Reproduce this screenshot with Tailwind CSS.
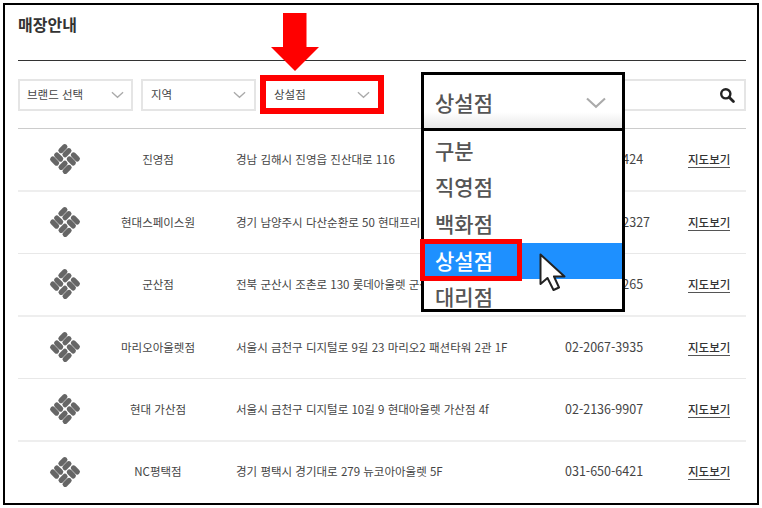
<!DOCTYPE html>
<html lang="ko">

<head>
    <meta charset="UTF-8">
    <title>매장안내</title>
    <script src="https://cdn.jsdelivr.net/npm/@tailwindcss/browser@4"></script>
</head>

<body class="bg-white w-[762px] h-[508px] overflow-hidden font-['Noto_Sans_CJK_KR','Liberation_Sans',sans-serif] text-[#444]">
    <svg class="hidden">
        <symbol id="logo" viewBox="-16 -16 32 32">
            <g transform="rotate(45) scale(-1 1)" fill="#666">
                <rect x="-10.5" y="-10.8" width="10" height="5" rx="2.4"/>
                <rect x="-10.5" y="-5.4" width="10" height="5" rx="2.4"/>
                <rect x="0.4" y="-10.5" width="5" height="10" rx="2.4"/>
                <rect x="5.8" y="-10.5" width="5" height="10" rx="2.4"/>
                <rect x="0.5" y="0.4" width="10" height="5" rx="2.4"/>
                <rect x="0.5" y="5.8" width="10" height="5" rx="2.4"/>
                <rect x="-10.8" y="0.5" width="5" height="10" rx="2.4"/>
                <rect x="-5.4" y="0.5" width="5" height="10" rx="2.4"/>
            </g>
        </symbol>
        <symbol id="chev" viewBox="0 0 14 8">
            <path d="M1 1l6 5.5L13 1" fill="none" stroke="#aaa" stroke-width="1.4"/>
        </symbol>
    </svg>

    <div class="relative ml-[3px] mt-[3px] w-[756px] h-[502px] border-2 border-black pl-[13px] pr-[11px]">
        <h1 class="h-[56px] pt-[7px] text-[16px] leading-[24px] font-bold text-[#333] border-b border-[#333]">매장안내</h1>

        <!-- 필터 -->
        <div class="h-[68px] flex items-center border-b border-[#ccc] text-[11.5px]">
            <div class="w-[115px] h-[32px] flex items-center justify-between pl-[7px] pr-[7px] border-2 border-[#e5e5e5]">
                브랜드 선택 <svg class="w-[13px] h-[8px]"><use href="#chev"/></svg>
            </div>
            <div class="ml-[8px] w-[115px] h-[32px] flex items-center justify-between pl-[8px] pr-[8px] border-2 border-[#e5e5e5]">
                지역 <svg class="w-[13px] h-[8px]"><use href="#chev"/></svg>
            </div>
            <div class="ml-[4px] w-[124px] h-[39px] flex items-center justify-between pl-[8px] pr-[8px] border-[6px] border-[#f00]">
                상설점 <svg class="w-[13px] h-[8px]"><use href="#chev"/></svg>
            </div>
            <div class="ml-[37px] flex-1 h-[32px] flex items-center justify-end pr-[9px] border-2 border-[#e5e5e5]">
                <svg class="w-[16px] h-[16px]" viewBox="0 0 16 16"><circle cx="6.8" cy="6.8" r="4.6" fill="none" stroke="#222" stroke-width="2.4"/><path d="M10.4 10.4l4 4" stroke="#222" stroke-width="2.8" stroke-linecap="round"/></svg>
            </div>
        </div>

        <!-- 매장 목록 -->
        <ul class="text-[11.5px]">
            <li class="h-[62.5px] flex items-center border-b-2 border-[#eee]">
                <svg class="ml-[30px] w-[34px] h-[34px] shrink-0"><use href="#logo"/></svg>
                <span class="w-[152px] mr-[2px] text-center">진영점</span>
                <span class="w-[329px]">경남 김해시 진영읍 진산대로 116</span>
                <span class="w-[123px] text-[12.5px]">055-343-7424</span>
                <a class="font-medium text-[#333] border-b border-[#555] leading-[16px]">지도보기</a>
            </li>
            <li class="h-[62.5px] flex items-center border-b border-[#e8e8e8]">
                <svg class="ml-[30px] w-[34px] h-[34px] shrink-0"><use href="#logo"/></svg>
                <span class="w-[152px] mr-[2px] text-center">현대스페이스원</span>
                <span class="w-[329px]">경기 남양주시 다산순환로 50 현대프리미엄아울렛 3층</span>
                <span class="w-[123px] text-[12.5px]">031-5560-2327</span>
                <a class="font-medium text-[#333] border-b border-[#555] leading-[16px]">지도보기</a>
            </li>
            <li class="h-[62.5px] flex items-center border-b-2 border-[#eee]">
                <svg class="ml-[30px] w-[34px] h-[34px] shrink-0"><use href="#logo"/></svg>
                <span class="w-[152px] mr-[2px] text-center">군산점</span>
                <span class="w-[329px]">전북 군산시 조촌로 130 롯데아울렛 군산점 2층</span>
                <span class="w-[123px] text-[12.5px]">063-731-3265</span>
                <a class="font-medium text-[#333] border-b border-[#555] leading-[16px]">지도보기</a>
            </li>
            <li class="h-[62.5px] flex items-center border-b border-[#e8e8e8]">
                <svg class="ml-[30px] w-[34px] h-[34px] shrink-0"><use href="#logo"/></svg>
                <span class="w-[152px] mr-[2px] text-center">마리오아울렛점</span>
                <span class="w-[329px]">서울시 금천구 디지털로 9길 23 마리오2 패션타워 2관 1F</span>
                <span class="w-[123px] text-[12.5px]">02-2067-3935</span>
                <a class="font-medium text-[#333] border-b border-[#555] leading-[16px]">지도보기</a>
            </li>
            <li class="h-[62.5px] flex items-center border-b-2 border-[#eee]">
                <svg class="ml-[30px] w-[34px] h-[34px] shrink-0"><use href="#logo"/></svg>
                <span class="w-[152px] mr-[2px] text-center">현대 가산점</span>
                <span class="w-[329px]">서울시 금천구 디지털로 10길 9 현대아울렛 가산점 4f</span>
                <span class="w-[123px] text-[12.5px]">02-2136-9907</span>
                <a class="font-medium text-[#333] border-b border-[#555] leading-[16px]">지도보기</a>
            </li>
            <li class="h-[60px] flex items-center">
                <svg class="ml-[30px] w-[34px] h-[34px] shrink-0"><use href="#logo"/></svg>
                <span class="w-[152px] mr-[2px] text-center">NC평택점</span>
                <span class="w-[329px]">경기 평택시 경기대로 279 뉴코아아울렛 5F</span>
                <span class="w-[123px] text-[12.5px]">031-650-6421</span>
                <a class="font-medium text-[#333] border-b border-[#555] leading-[16px]">지도보기</a>
            </li>
        </ul>

        <!-- 빨간 화살표 -->
        <svg class="absolute left-[266px] top-[8px] w-[48px] h-[58px]" viewBox="0 0 48 58">
            <path d="M12 0h23.500v34h12.500L24 58 0 34h12z" fill="#f00"/>
        </svg>

        <!-- 드롭다운 확대 -->
        <div class="absolute left-[416px] top-[67px] w-[204px] h-[240px] border-[3px] border-black bg-white flex flex-col overflow-hidden text-[21px] font-medium text-[#555]">
            <div class="h-[56px] shrink-0 flex items-center justify-between pt-[3px] pl-[11px] pr-[15px] border-b-[3px] border-black bg-linear-to-b from-white from-70% to-[#e8e8e8]">
                상설점 <svg class="w-[22px] h-[12px]"><use href="#chev"/></svg>
            </div>
            <div class="h-[36px] shrink-0 mt-[2px] flex items-center pl-[11px]">구분</div>
            <div class="h-[36px] shrink-0 flex items-center pl-[11px]">직영점</div>
            <div class="h-[38px] shrink-0 flex items-center pl-[11px]">백화점</div>
            <div class="h-[36px] shrink-0 flex items-center pl-[11px] bg-[#1e90ff] text-white">상설점</div>
            <div class="h-[36px] shrink-0 flex items-center pl-[11px]">대리점</div>
        </div>

        <!-- 선택 항목 표시 -->
        <div class="absolute left-[415px] top-[234px] w-[102px] h-[42px] border-[5px] border-[#f00]"></div>

        <!-- 커서 -->
        <svg class="absolute left-[534px] top-[248px] w-[27px] h-[40px]" viewBox="0 0 27 40">
            <path d="M1.500 1.500V31l7-6 6 12 5.500-2.500-5-11h10.500z" fill="#fff" stroke="#222" stroke-width="2" stroke-linejoin="round"/>
        </svg>
    </div>
</body>

</html>
